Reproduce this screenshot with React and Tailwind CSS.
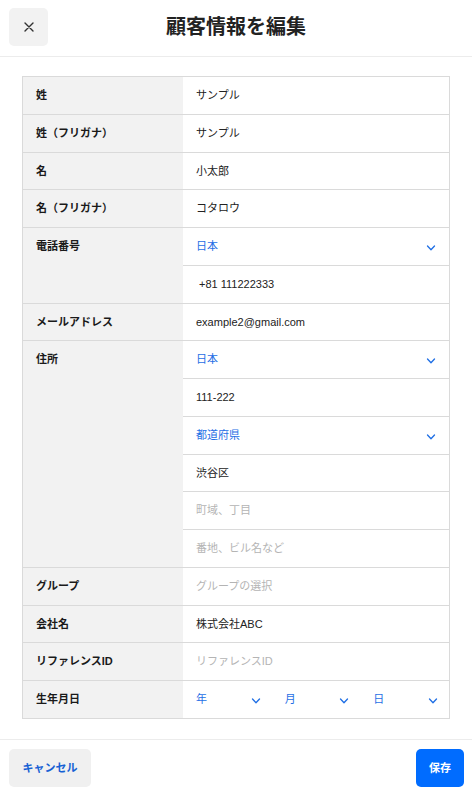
import React from "react";

const font = { fontFamily: '"Liberation Sans", "Noto Sans CJK JP", sans-serif' };

function Chevron() {
  return (
    <svg width="10" height="6" viewBox="0 0 10 6" fill="none" className="shrink-0 mt-[3px]">
      <path d="M1.5 1l3.5 3.8L8.5 1" stroke="#1f6fe5" strokeWidth="1.3" strokeLinecap="round" strokeLinejoin="round" />
    </svg>
  );
}

function Cell({ children, last }) {
  return (
    <div className={`flex items-center px-[13px] text-[11px] ${last ? "h-[36.75px]" : "h-[37.75px] border-b border-[#dadada]"}`}>
      {children}
    </div>
  );
}

function Text({ value, placeholder, className = "" }) {
  return value ? (
    <span className={`text-[#222] ${className}`}>{value}</span>
  ) : (
    <span className="text-[#b4b4b4]">{placeholder}</span>
  );
}

function Select({ value }) {
  return (
    <div className="flex items-center justify-between w-full">
      <span className="text-[#1f6fe5]">{value}</span>
      <Chevron />
    </div>
  );
}

function Label({ children }) {
  return (
    <div className="w-[160px] shrink-0 bg-[#f2f2f2]">
      <div className="h-[36.75px] flex items-center px-[13px] text-[11px] font-bold text-[#1a1a1a]">{children}</div>
    </div>
  );
}

function Row({ label, cells }) {
  return (
    <div className="flex border-b border-[#dadada]">
      <Label>{label}</Label>
      <div className="flex-1 min-w-0">
        {cells.map((c, i) => (
          <Cell key={i} last={i === cells.length - 1}>
            {c}
          </Cell>
        ))}
      </div>
    </div>
  );
}

export default function App() {
  const rows = [
    { label: "姓", cells: [<Text value="サンプル" />] },
    { label: "姓（フリガナ）", cells: [<Text value="サンプル" />] },
    { label: "名", cells: [<Text value="小太郎" />] },
    { label: "名（フリガナ）", cells: [<Text value="コタロウ" />] },
    {
      label: "電話番号",
      cells: [<Select value="日本" />, <Text value="+81 111222333" className="pl-[3px]" />],
    },
    { label: "メールアドレス", cells: [<Text value="example2@gmail.com" />] },
    {
      label: "住所",
      cells: [
        <Select value="日本" />,
        <Text value="111-222" />,
        <Select value="都道府県" />,
        <Text value="渋谷区" />,
        <Text placeholder="町域、丁目" />,
        <Text placeholder="番地、ビル名など" />,
      ],
    },
    { label: "グループ", cells: [<Text placeholder="グループの選択" />] },
    { label: "会社名", cells: [<Text value="株式会社ABC" />] },
    { label: "リファレンスID", cells: [<Text placeholder="リファレンスID" />] },
  ];

  return (
    <div className="w-[472px] h-[792px] flex flex-col bg-white" style={font}>
      <header className="h-[57px] shrink-0 relative flex items-center justify-center border-b border-[#ececec]">
        <button className="absolute left-[9px] top-[8px] w-[39px] h-[38px] rounded-[5px] bg-[#f2f2f2] flex items-center justify-center">
          <svg width="10" height="10" viewBox="0 0 10 10">
            <path d="M1 1l8 8M9 1l-8 8" stroke="#333" strokeWidth="1.4" strokeLinecap="round" />
          </svg>
        </button>
        <h1 className="text-[20px] font-bold text-[#222] -mt-[2px]">顧客情報を編集</h1>
      </header>

      <main className="flex-1 pt-[19px] px-[22px]">
        <div className="border border-[#dadada]">
          {rows.map((r, i) => (
            <Row key={i} label={r.label} cells={r.cells} />
          ))}
          <div className="flex">
            <Label>生年月日</Label>
            <div className="flex-1 grid grid-cols-3 text-[11px]">
              {["年", "月", "日"].map((v) => (
                <div key={v} className="h-[36.75px] flex items-center pl-[13px] pr-[11px]">
                  <Select value={v} />
                </div>
              ))}
            </div>
          </div>
        </div>
      </main>

      <footer className="h-[53px] shrink-0 border-t border-[#ececec] flex items-start justify-between pl-[9px] pr-[8px] pt-[9px]">
        <button className="h-[38px] w-[82px] rounded-[5px] bg-[#f0f0f0] text-[11px] font-bold text-[#1560d4]">キャンセル</button>
        <button className="h-[38px] w-[48px] rounded-[5px] bg-[#006cff] text-[11px] font-bold text-white">保存</button>
      </footer>
    </div>
  );
}
